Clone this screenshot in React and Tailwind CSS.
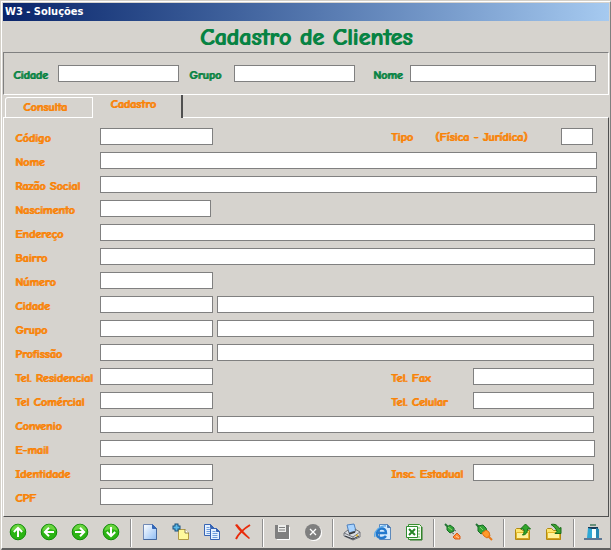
import React from "react";

const labelFont = "font-['Comic_Neue','Comic_Sans_MS',Lato,cursive] font-bold text-[12px] leading-[13px] whitespace-nowrap [text-shadow:1px_0_currentColor]";
const field = "h-[17px] min-w-0 rounded-none border border-[#808080] bg-white px-1 text-[11px] outline-none";

function Field({ id, label, size = "full", extra = false, inset = "pr-[3px]", side }) {
  return (
    <div className={`flex h-[17px] items-center ${inset}`}>
      <label htmlFor={id} className={`${labelFont} w-[85px] shrink-0 pt-1 text-[#f98307]`}>{label}</label>
      <input id={id} type="text" className={`${field} ${size === "full" ? "flex-1" : size === "date" ? "w-[111px]" : "w-[113px]"}`} />
      {extra && <input type="text" aria-label={`${label} descrição`} className={`${field} ml-1 flex-1`} />}
      {side && (
        <div className="ml-auto flex items-center">
          <label htmlFor={`${id}-side`} className={`${labelFont} w-[82px] pt-1 text-[#f98307]`}>{side}</label>
          <input id={`${id}-side`} type="text" className={`${field} w-[121px]`} />
        </div>
      )}
    </div>
  );
}

function Svg({ children }) {
  return <svg width="20" height="20" viewBox="0 0 20 20" fill="none" aria-hidden="true">{children}</svg>;
}

function Arrow({ turn }) {
  return (
    <Svg>
      <circle cx="10" cy="10" r="7.8" fill="#2bb414" stroke="#128a0a" strokeWidth="1" />
      <path d="M3.5 9a6.5 6.5 0 0 1 13 0c-3-2.500-9-2.500-13 0Z" fill="#69d43f" />
      <g transform={`rotate(${turn} 10 10)`} stroke="#fff" strokeWidth="2">
        <path d="M10 15V6M5.800 10 10 5.800 14.200 10" />
      </g>
    </Svg>
  );
}

const NewPage = () => (
  <Svg>
    <defs>
      <linearGradient id="sheet" x1="0" y1="0" x2="1" y2="1">
        <stop offset="0" stopColor="#fff" /><stop offset="1" stopColor="#8fbdf5" />
      </linearGradient>
    </defs>
    <path d="M3.500 2.500h9l4 4v11h-13z" fill="url(#sheet)" stroke="#7189b5" />
    <path d="M12.500 2.500v4h4z" fill="#3467b7" stroke="#3467b7" />
    <path d="M16.500 6v11.500h-13" stroke="#44689f" />
  </Svg>
);
const AddPage = () => (
  <Svg>
    <path d="M7.500 7.500h7l3 3v7h-10z" fill="#fff99c" stroke="#b39b45" />
    <path d="M14 7v4h4" fill="#fff" stroke="#8d8048" />
    <path d="M5.500 1.500v8M1.500 5.500h8" stroke="#164f7d" strokeWidth="4" />
    <path d="M5.500 2.500v6M2.500 5.500h6" stroke="#5dbbe9" strokeWidth="2" />
  </Svg>
);
const Copy = () => (
  <Svg>
    {[[2.5, 2.5], [8.5, 6.5]].map(([x, y]) => (
      <g key={x} transform={`translate(${x} ${y})`}>
        <path d="M0 0h6l3 3v8H0z" fill="#e5f1ff" stroke="#3764b4" />
        <path d="M6 0v3h3z" fill="#3764b4" stroke="#3764b4" />
        <path d="M2 3h3M2 5h5M2 7h5M2 9h5" stroke="#6f9ddd" />
      </g>
    ))}
  </Svg>
);
const Delete = () => (
  <Svg>
    <path d="M2 3 4 2c4 5 8 9 13 14l-1 1C11 13 6 9 2 3Z" fill="#e92b0b" />
    <path d="M17 3C12 6 6 11 3 17" stroke="#e92b0b" strokeWidth="2" />
  </Svg>
);
const Save = () => (
  <Svg>
    <path d="M5 17.500h12.500V5" stroke="#fff" />
    <path d="M3 3h14v14H4l-1-1z" fill="#7f7f7f" />
    <path d="M6 3h8v7H6z" fill="#ededeb" />
    <path d="M7 5.500h6M7 8h6" stroke="#7f7f7f" />
  </Svg>
);
const Cancel = () => (
  <Svg>
    <circle cx="11" cy="11" r="8" fill="#fff" />
    <circle cx="10" cy="10" r="8" fill="#7f7f7f" />
    <path d="m7 7 6 6m0-6-6 6" stroke="#fff" strokeWidth="1.300" />
  </Svg>
);
const Print = () => (
  <Svg>
    <path d="m5 3 7-1 2 7-7 2z" fill="#a8d3ff" stroke="#4d81c0" />
    <path d="m2 11 4-3 1 3 7-2-1-2 5 3v5l-7 3-9-4z" fill="#d9dce1" stroke="#70747c" />
    <path d="m2 11 9 4 7-5M11 15v3" stroke="#73767c" />
    <path d="m3 14 8 3 6-3" stroke="#30343b" />
    <path d="m7 12 6-2" stroke="#32383e" strokeWidth="1.500" />
    <path d="m14 14 2-1" stroke="#e6b92f" strokeWidth="1.500" />
  </Svg>
);
const Web = () => (
  <Svg>
    <path d="M6.500 2.500h8l3 3v12h-11z" fill="#d6eafd" stroke="#5d89bb" />
    <path d="M14.500 2.500v3h3" fill="#4777b1" stroke="#4777b1" />
    <path d="M4 11h9c0-6-8-6-9 0-1 6 7 6 9 3" stroke="#2379cd" strokeWidth="2.400" />
    <path d="M2 15C0 9 8 3 13 4" stroke="#57a8ea" strokeWidth="1.300" />
  </Svg>
);
const Sheet = () => (
  <Svg>
    <path d="M4.500 2.500h11l2 2v13h-13z" fill="#eff8e9" stroke="#388f2f" />
    <path d="M12 6h4M12 9h4M12 12h4M12 15h4" stroke="#7dbc70" />
    <path d="M2.500 4.500h11v11h-11z" fill="#fff" stroke="#2e8c2e" />
    <path d="m5 7 6 6m0-6-6 6" stroke="#278526" strokeWidth="2" />
    <path d="M18 5v13H6" stroke="#2a7927" />
  </Svg>
);
const Plug = ({ joined }) => (
  <Svg>
    {joined ? (
      <>
        <path d="m2 2 3 3" stroke="#267536" strokeWidth="2" />
        <path d="M4 4 9 3l3 3 1 3-3 1-3 2-3-3z" fill="#32a438" stroke="#166d25" />
        <path d="m6 5 3 3" stroke="#8bd56c" />
        <path d="m8 11 4-3 3 2 1 4-3 2-3-2z" fill="#ff9a2b" stroke="#dc6f10" />
        <path d="m14 14 4 4" stroke="#e87a18" strokeWidth="2" />
      </>
    ) : (
      <>
        <path d="m2 2 3 3" stroke="#267536" strokeWidth="2" />
        <path d="m4 5 3-2 4 3v3l-4 2-3-3z" fill="#32a438" stroke="#166d25" />
        <path d="m5 5 4 3" stroke="#8bd56c" />
        <path d="m10 7 3 2m-5 1 3 2" stroke="#5b6863" />
        <path d="m10 15 4-4 3 3v3h-5z" fill="#ff8a38" stroke="#da5c16" />
        <path d="m13 14 3 2" stroke="#ffd098" />
      </>
    )}
  </Svg>
);
const Folder = ({ out }) => (
  <Svg>
    <path d="M2.500 17.500v-10l1-1h4l2 2h7v9z" fill="#ffe66b" stroke="#b18b13" />
    <path d="M3.500 10.500h12v6h-12z" fill="#fff29a" stroke="#e5b92b" />
    <path d="M3 17h14" stroke="#c08810" />
    {out
      ? <path d="m12.500 2 5 5h-3c0 4-2 6-5 6 2-2 2-4 1-6h-3z" fill="#31a52b" stroke="#167015" />
      : <path d="M7 2.500c4-1 7 1 8 4l2-1v6h-6l2-2c-1-3-3-5-6-7z" fill="#3aa231" stroke="#196a18" />}
  </Svg>
);
const Exit = () => (
  <Svg>
    <path d="M7 2h6v2H7z" fill="#6b927c" />
    <path d="M5 5h10v11H5z" fill="#163b57" />
    <path d="m5 6 4 1v10l-5-1z" fill="#2ea8d5" />
    <path d="M9 7h4v9H9z" fill="#f6ffff" />
    <path d="m13 6 3 1v9h-3z" fill="#2588b4" />
    <path d="M1 17h18" stroke="#5c7794" strokeWidth="2" />
  </Svg>
);

const groups = [
  [["Primeiro", <Arrow turn={0} />], ["Anterior", <Arrow turn={-90} />], ["Próximo", <Arrow turn={90} />], ["Último", <Arrow turn={180} />]],
  [["Novo", <NewPage />], ["Adicionar", <AddPage />], ["Copiar", <Copy />], ["Excluir", <Delete />]],
  [["Salvar", <Save />], ["Cancelar", <Cancel />]],
  [["Imprimir", <Print />], ["Internet", <Web />], ["Planilha", <Sheet />]],
  [["Desconectar", <Plug />], ["Conectar", <Plug joined />]],
  [["Abrir", <Folder out />], ["Importar", <Folder />]],
  [["Sair", <Exit />]],
];

function SearchField({ id, label, labelWidth, grow }) {
  return (
    <div className={`flex items-center ${grow ? "flex-1" : ""}`}>
      <label htmlFor={id} className={`${labelFont} ${labelWidth} shrink-0 pt-1 text-[#078343]`}>{label}</label>
      <input id={id} type="text" className={`${field} ${grow ? "flex-1" : "w-[121px]"}`} />
    </div>
  );
}

export default function App() {
  return (
    <div className="border-t border-l border-[#d4d0c8] bg-[#d6d3ce]">
      <main className="border-t border-r border-b-2 border-l border-t-white border-r-[#808080] border-b-[#606060] border-l-white pt-px pr-px pl-px">
        <header className="flex h-[18px] items-center bg-linear-to-r from-[#0a246a] to-[#a6caf0] px-0.5 font-['Tahoma','DejaVu_Sans_Condensed','DejaVu_Sans',sans-serif] text-[11px] font-bold text-white">
          W3 - Soluções
        </header>
        <h1 className="h-[31px] text-center font-['Comic_Neue','Comic_Sans_MS',Lato,cursive] text-[24px] leading-[33px] font-bold text-[#078343] [text-shadow:1px_0_currentColor]">
          Cadastro de Clientes
        </h1>
        <section className="flex border border-t-[#808080] border-r-white border-b-white border-l-[#808080] py-3 pr-3 pl-[9px]">
          <SearchField id="busca-cidade" label="Cidade" labelWidth="w-[45px]" />
          <div className="w-[10px]" />
          <SearchField id="busca-grupo" label="Grupo" labelWidth="w-[45px]" />
          <div className="w-[18px]" />
          <SearchField id="busca-nome" label="Nome" labelWidth="w-[37px]" grow />
        </section>

        <div role="tablist" className="flex h-[22px] items-end pl-0.5">
          <button type="button" role="tab" aria-selected="false" className={`${labelFont} h-5 w-[88px] rounded-tl-[3px] border-t border-r border-l border-white pr-2 text-[#f98307]`}>Consulta</button>
          <button type="button" role="tab" aria-selected="true" className={`${labelFont} relative -mb-px h-[23px] w-[90px] border-r-2 border-[#505050] bg-[#d6d3ce] pr-2 pb-1 text-[#f98307]`}>Cadastro</button>
        </div>

        <form className="flex flex-col gap-[7px] border border-t-white border-r-[#505050] border-b-[#505050] border-l-white px-[11px] pt-[10px] pb-[11px]">
          <div className="flex h-[17px] items-center pr-1">
            <label htmlFor="codigo" className={`${labelFont} w-[85px] shrink-0 pt-1 text-[#f98307]`}>Código</label>
            <input id="codigo" type="text" className={`${field} w-[113px]`} />
            <label htmlFor="tipo" className={`${labelFont} ml-auto flex w-[170px] pt-0.5 text-[#f98307]`}>
              <span className="w-11">Tipo</span>
              <span>(Física - Jurídica)</span>
            </label>
            <input id="tipo" type="text" className={`${field} w-8`} />
          </div>
          <Field id="nome" label="Nome" inset="pr-0" />
          <Field id="razao" label="Razão Social" inset="pr-0" />
          <Field id="nascimento" label="Nascimento" size="date" />
          <Field id="endereco" label="Endereço" inset="pr-0.5" />
          <Field id="bairro" label="Bairro" inset="pr-0.5" />
          <Field id="numero" label="Número" size="short" />
          <Field id="cidade" label="Cidade" size="short" extra />
          <Field id="grupo" label="Grupo" size="short" extra />
          <Field id="profissao" label="Profissão" size="short" extra />
          <Field id="residencial" label="Tel. Residencial" size="short" side="Tel. Fax" />
          <Field id="comercial" label="Tel Comércial" size="short" side="Tel. Celular" />
          <Field id="convenio" label="Convenio" size="short" extra />
          <Field id="email" label="E-mail" inset="pr-0.5" />
          <Field id="identidade" label="Identidade" size="short" side="Insc. Estadual" />
          <Field id="cpf" label="CPF" size="short" />
        </form>

        <div role="toolbar" aria-label="Ações" className="-ml-px flex h-[31px] items-center">
          {groups.map((items, g) => (
            <React.Fragment key={g}>
              {g > 0 && <div className="mr-0.5 ml-1 h-7 w-0.5 shrink-0 border-r border-l border-r-white border-l-[#909090]" />}
              {items.map(([name, icon]) => (
                <button key={name} type="button" aria-label={name} className="flex h-[31px] w-[31px] shrink-0 items-center justify-center pb-0.5">{icon}</button>
              ))}
            </React.Fragment>
          ))}
        </div>
      </main>
    </div>
  );
}
